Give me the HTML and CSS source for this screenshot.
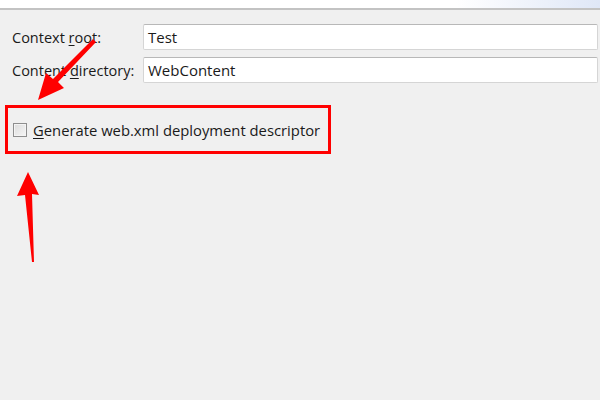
FILE: index.html
```html
<!DOCTYPE html>
<html>
<head>
<meta charset="utf-8">
<link rel="stylesheet" href="styles.css">
</head>
<body>
<div class="page">
  <div class="topbar"></div>
  <div class="form">
    <div class="row">
      <label class="lbl">Context <u>r</u>oot:</label>
      <div class="field">Test</div>
    </div>
    <div class="row">
      <label class="lbl">Content <u>d</u>irectory:</label>
      <div class="field">WebContent</div>
    </div>
  </div>
  <div class="highlight">
    <span class="check"></span>
    <span class="cbtext"><u>G</u>enerate web.xml deployment descriptor</span>
  </div>
  <svg class="arrows" width="600" height="400" viewBox="0 0 600 400">
    <polygon points="93,39 96,42 58,82 64,88 38,100 46,73 53,79" fill="#ff0000"/>
    <polygon points="28,172 39,195 32,194 34,262 32,262 25,195 17,196" fill="#ff0000"/>
  </svg>
</div>
</body>
</html>
```
FILE: styles.css
```css
html, body { margin: 0; padding: 0; }
body {
  background: #f0f0f0;
  font-family: "Open Sans", "Noto Sans", sans-serif;
  font-size: 14.5px;
  color: #1a1a1a;
}
.page { position: relative; width: 600px; height: 400px; overflow: hidden; }
.topbar {
  height: 8px;
  background: linear-gradient(90deg, #ffffff 0%, #ffffff 76%, #dfe7f7 100%);
  border-bottom: 2px solid #c3c3c3;
}
.form { padding: 14px 2px 0 12px; display: flex; flex-direction: column; gap: 7px; }
.row { display: flex; align-items: center; }
.lbl { width: 131px; flex: none; white-space: nowrap; }
.lbl u { text-decoration-thickness: 1px; text-underline-offset: 2px; }
.field {
  flex: 1;
  height: 26px;
  box-sizing: border-box;
  background: #ffffff;
  border: 1px solid #d5d5d5;
  border-top-color: #b8b8b8;
  border-radius: 2px;
  padding: 3px 4px;
  line-height: 18px;
  font-size: 15px;
}
.highlight {
  margin: 22px 0 0 5px;
  width: 326px;
  height: 49px;
  box-sizing: border-box;
  border: 3px solid #ff0000;
  display: flex;
  align-items: center;
  padding-left: 5px;
  gap: 6px;
}
.check {
  width: 14px; height: 14px;
  box-sizing: border-box;
  border: 1px solid #8e8e8e;
  background: linear-gradient(135deg, #dcdcdc, #f6f6f6);
  box-shadow: inset 0 0 0 1px #f4f4f4;
}
.cbtext { font-size: 14.8px; white-space: nowrap; }
.cbtext u { text-underline-offset: 2px; }
.arrows { position: absolute; left: 0; top: 0; }
```
